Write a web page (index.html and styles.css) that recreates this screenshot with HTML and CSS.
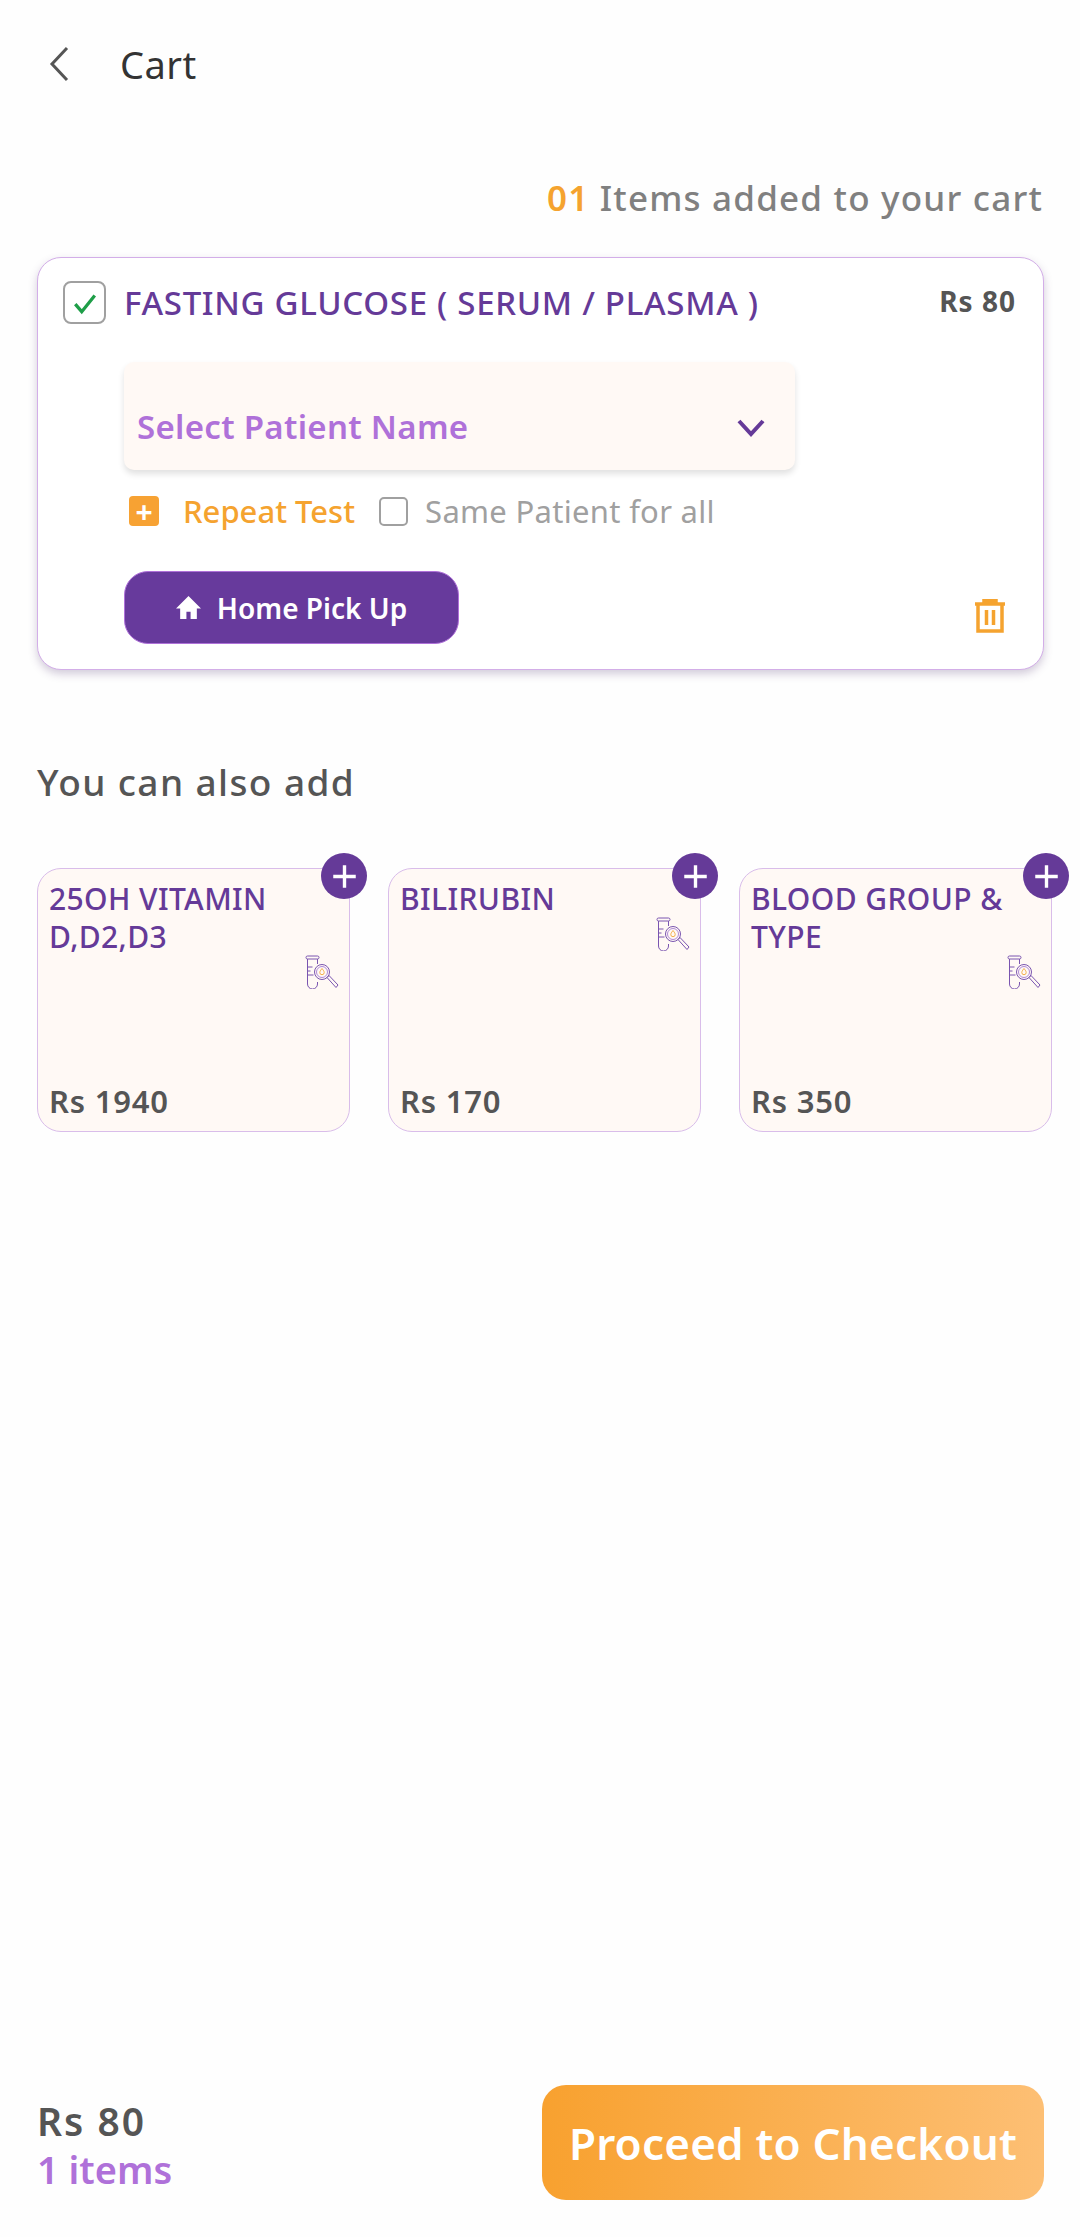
FILE: index.html
```html
<!DOCTYPE html>
<html>
<head>
  <meta charset="UTF-8">
  <meta name="viewport" content="width=device-width, initial-scale=1.0">
  <title>Cart</title>
  <link rel="stylesheet" href="styles.css">
</head>
<body>
  <div class="page">
    <header class="topbar">
      <svg class="back-icon" viewBox="0 0 22 36"><path d="M19 2 4 18l15 16"/></svg>
      <span class="topbar-title">Cart</span>
    </header>

    <p class="cart-count"><span class="count-num">01</span> Items added to your cart</p>

    <section class="cart-card">
      <div class="cart-head">
        <span class="checkbox checked">
          <svg viewBox="0 0 24 24"><path d="M3 13l6 7L21 5"/></svg>
        </span>
        <span class="test-name">FASTING GLUCOSE ( SERUM / PLASMA )</span>
        <span class="test-price">Rs 80</span>
      </div>

      <div class="patient-select">
        <span>Select Patient Name</span>
        <svg viewBox="0 0 30 20"><path d="M3 3l12 13L27 3"/></svg>
      </div>

      <div class="repeat-row">
        <span class="repeat-plus">+</span>
        <span class="repeat-text">Repeat Test</span>
        <span class="checkbox small"></span>
        <span class="same-text">Same Patient for all</span>
      </div>

      <div class="card-foot">
        <button class="pickup-btn">
          <svg viewBox="0 0 24 24"><path d="M12 1 0 13h4v10h6v-7h4v7h6V13h4z"/></svg>
          Home Pick Up
        </button>
        <svg class="trash-icon" viewBox="0 0 32 34">
          <path d="M10 3.500V1.500h12v2M1 5h30M4 5v27h24V5M12.500 11v15M19.500 11v15"/>
        </svg>
      </div>
    </section>

    <h2 class="also-title">You can also add</h2>

    <div class="suggest-list">
      <div class="suggest-card">
        <span class="add-btn"><svg viewBox="0 0 24 24"><path d="M12 2v20M2 12h20"/></svg></span>
        <div class="suggest-name">25OH VITAMIN D,D2,D3</div>
        <svg class="test-icon" viewBox="0 0 34 34"><use href="#lab"/></svg>
        <div class="suggest-price">Rs 1940</div>
      </div>
      <div class="suggest-card">
        <span class="add-btn"><svg viewBox="0 0 24 24"><path d="M12 2v20M2 12h20"/></svg></span>
        <div class="suggest-name">BILIRUBIN</div>
        <svg class="test-icon" viewBox="0 0 34 34"><use href="#lab"/></svg>
        <div class="suggest-price">Rs 170</div>
      </div>
      <div class="suggest-card">
        <span class="add-btn"><svg viewBox="0 0 24 24"><path d="M12 2v20M2 12h20"/></svg></span>
        <div class="suggest-name">BLOOD GROUP &amp; TYPE</div>
        <svg class="test-icon" viewBox="0 0 34 34"><use href="#lab"/></svg>
        <div class="suggest-price">Rs 350</div>
      </div>
    </div>

    <footer class="checkout-bar">
      <div class="totals">
        <div class="total-price">Rs 80</div>
        <div class="total-items">1 items</div>
      </div>
      <button class="checkout-btn">Proceed to Checkout</button>
    </footer>
  </div>

  <svg class="defs" width="0" height="0">
    <symbol id="lab" viewBox="0 0 34 34">
      <g fill="none" stroke="#7a55b0" stroke-width="1">
        <rect x="1" y="1" width="13" height="3" rx="1.500"/>
        <path d="M2.500 4v25a5 5 0 0 0 10 0v-2M12.500 4v5M2.500 12h5M2.500 16h3M2.500 20h6"/>
        <circle cx="17" cy="17" r="7.500"/>
        <circle cx="17" cy="17" r="5.500" stroke="#b08ad8"/>
        <path d="M22 22.500l2-2 9 9.500-2 2.500z"/>
        <path d="M17 13.500c-1.500 2-2.200 3-2.200 4a2.200 2.200 0 0 0 4.400 0c0-1-.7-2-2.200-4z" stroke="#f5b04a"/>
      </g>
    </symbol>
  </svg>
</body>
</html>
```

FILE: styles.css
```css
* {
  box-sizing: border-box;
}

body {
  margin: 0;
  background-color: #FEFEFE;
  font-family: "Noto Sans", Lato, sans-serif;
  color: #555555;
}

.page {
  display: flex;
  flex-direction: column;
  height: 2237px;
  padding: 0 36px 37px 37px;
}

.defs {
  position: absolute;
}

/* top bar */
.topbar {
  display: flex;
  align-items: center;
  height: 128px;
}

.back-icon {
  width: 22px;
  height: 36px;
  margin-left: 11px;
  fill: none;
  stroke: #555555;
  stroke-width: 3;
}

.topbar-title {
  margin-left: 50px;
  font-size: 38px;
  letter-spacing: 0.5px;
  color: #333333;
}

.cart-count {
  margin: 47px 1px 0 0;
  height: 82px;
  text-align: right;
  font-size: 35px;
  font-weight: 500;
  letter-spacing: 1.200px;
  line-height: 46px;
  color: #808080;
}

.count-num {
  color: #F5A32F;
  font-weight: 600;
}

/* cart item */
.cart-card {
  height: 413px;
  padding: 22px 27px 0 25px;
  background-color: #FFFFFF;
  border: 1.500px solid #D3AEE8;
  border-radius: 24px;
  box-shadow: 0 4px 8px rgba(80, 50, 110, 0.25);
}

.cart-head {
  display: flex;
  align-items: center;
}

.checkbox {
  display: flex;
  align-items: center;
  justify-content: center;
  flex-shrink: 0;
  width: 43px;
  height: 43px;
  border: 2.500px solid #A0A0A0;
  border-radius: 8px;
  background-color: #FFFFFF;
}

.checkbox svg {
  width: 26px;
  height: 26px;
  fill: none;
  stroke: #1E9E48;
  stroke-width: 3;
}

.checkbox.small {
  width: 29px;
  height: 29px;
  border-radius: 5px;
  margin-left: 24px;
}

.test-name {
  margin-left: 18px;
  font-size: 33px;
  font-weight: 500;
  letter-spacing: 0.7px;
  color: #653A98;
}

.test-price {
  margin-left: auto;
  margin-top: -4px;
  font-size: 28px;
  font-weight: 700;
  letter-spacing: 1px;
}

.patient-select {
  display: flex;
  align-items: center;
  justify-content: space-between;
  width: 671px;
  height: 108px;
  margin: 37px 0 0 61px;
  padding: 20px 29px 0 13px;
  background-color: #FFF9F5;
  border-radius: 10px;
  box-shadow: 0 4px 6px rgba(0, 0, 0, 0.12);
  font-size: 33px;
  font-weight: 600;
  letter-spacing: 0.3px;
  color: #AF71D9;
}

.patient-select svg {
  width: 30px;
  height: 20px;
  margin-top: 4px;
  fill: none;
  stroke: #653A98;
  stroke-width: 4;
}

.repeat-row {
  display: flex;
  align-items: center;
  height: 44px;
  margin: 19px 0 0 66px;
  font-size: 31px;
}

.repeat-plus {
  display: flex;
  align-items: center;
  justify-content: center;
  width: 30px;
  height: 30px;
  border-radius: 4px;
  background-color: #F7A233;
  color: #FFFFFF;
  font-size: 30px;
  font-weight: 700;
}

.repeat-text {
  margin-left: 24px;
  color: #F5A32F;
  font-weight: 500;
}

.same-text {
  margin-left: 17px;
  letter-spacing: 0.3px;
  color: #A0A0A0;
}

.card-foot {
  display: flex;
  align-items: flex-end;
  justify-content: space-between;
  margin: 38px 0 0 61px;
}

.pickup-btn {
  display: flex;
  align-items: center;
  justify-content: center;
  gap: 16px;
  width: 335px;
  height: 73px;
  border: 1px solid #AF71D9;
  border-radius: 24px;
  background-color: #673A9C;
  color: #FFFFFF;
  font-family: inherit;
  font-size: 28px;
  font-weight: 600;
}

.pickup-btn svg {
  width: 25px;
  height: 25px;
  fill: #FFFFFF;
}

.trash-icon {
  width: 32px;
  height: 34px;
  margin: 0 10px 11px 0;
  fill: none;
  stroke: #F5A32F;
  stroke-width: 3.500;
}

/* suggestions */
.also-title {
  margin: 87px 0 0;
  height: 111px;
  font-size: 37px;
  font-weight: 500;
  letter-spacing: 1.400px;
  line-height: 50px;
}

.suggest-list {
  display: flex;
  gap: 38px;
}

.suggest-card {
  position: relative;
  display: flex;
  flex-direction: column;
  flex-shrink: 0;
  width: 313px;
  height: 264px;
  padding: 11px 10px 10px 11px;
  background-color: #FFF9F5;
  border: 1.500px solid #D9BDEA;
  border-radius: 24px;
}

.add-btn {
  position: absolute;
  top: -16px;
  right: -18px;
  display: flex;
  align-items: center;
  justify-content: center;
  width: 46px;
  height: 46px;
  border-radius: 50%;
  background-color: #653A98;
}

.add-btn svg {
  width: 27px;
  height: 27px;
  fill: none;
  stroke: #FFFFFF;
  stroke-width: 3;
}

.suggest-name {
  padding-right: 30px;
  font-size: 30px;
  font-weight: 500;
  letter-spacing: 0.4px;
  line-height: 38px;
  color: #653A98;
}

.test-icon {
  flex-shrink: 0;
  width: 34px;
  height: 34px;
  margin: -1px 0 0 auto;
}

.suggest-price {
  margin-top: auto;
  font-size: 31px;
  font-weight: 600;
  letter-spacing: 0.8px;
  line-height: 40px;
}

/* bottom bar */
.checkout-bar {
  display: flex;
  align-items: center;
  justify-content: space-between;
  margin-top: auto;
}

.totals {
  padding-top: 4px;
}

.total-price {
  font-size: 39px;
  font-weight: 600;
  letter-spacing: 2px;
  line-height: 48px;
}

.total-items {
  font-size: 38px;
  font-weight: 600;
  line-height: 48px;
  color: #AF71D9;
}

.checkout-btn {
  width: 502px;
  height: 115px;
  border: 0;
  border-radius: 24px;
  background-image: linear-gradient(to right, #F8A12F, #FDBF74);
  color: #FFFFFF;
  font-family: inherit;
  font-size: 44px;
  font-weight: 600;
  letter-spacing: 0.2px;
}
```
